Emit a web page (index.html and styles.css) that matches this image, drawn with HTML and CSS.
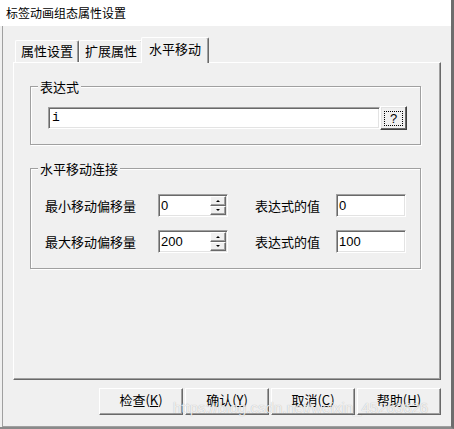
FILE: index.html
```html
<!DOCTYPE html>
<html>
<head>
<meta charset="utf-8">
<link rel="stylesheet" href="styles.css">
</head>
<body>
<div class="window">
  <div class="titlebar">标签动画组态属性设置</div>
  <div class="client">
    <div class="tabs">
      <div class="tab">属性设置</div>
      <div class="tab">扩展属性</div>
      <div class="tab active">水平移动</div>
    </div>
    <div class="panel">
      <div class="group g1">
        <div class="group-title">表达式</div>
        <div class="expr-row">
          <div class="field expr">i</div>
          <div class="qbtn"><span class="focus">?</span></div>
        </div>
      </div>
      <div class="group g2">
        <div class="group-title">水平移动连接</div>
        <div class="grid">
          <div class="label">最小移动偏移量</div>
          <div class="field spin"><span class="val-text">0</span><div class="spin-btns"><div class="sb"><i class="arrow up"></i></div><div class="sb"><i class="arrow down"></i></div></div></div>
          <div class="label label2">表达式的值</div>
          <div class="field val"><span class="val-text">0</span></div>
          <div class="label">最大移动偏移量</div>
          <div class="field spin"><span class="val-text">200</span><div class="spin-btns"><div class="sb"><i class="arrow up"></i></div><div class="sb"><i class="arrow down"></i></div></div></div>
          <div class="label label2">表达式的值</div>
          <div class="field val"><span class="val-text">100</span></div>
        </div>
      </div>
    </div>
    <div class="buttons">
      <div class="btn">检查(<u>K</u>)</div>
      <div class="btn">确认(<u>Y</u>)</div>
      <div class="btn">取消(<u>C</u>)</div>
      <div class="btn">帮助(<u>H</u>)</div>
    </div>
  </div>
  <div class="watermark">https://blog.csdn.net/weixin_45263626</div>
</div>
</body>
</html>
```
FILE: styles.css
```css
html, body {
  margin: 0;
  padding: 0;
  background: #f0f0f0;
  overflow: hidden;
}
body {
  font-family: "Noto Sans CJK SC", "Liberation Sans", sans-serif;
  color: #000;
}
.window {
  position: relative;
  width: 454px;
  height: 429px;
  box-sizing: border-box;
  border-right: 3px solid #6d6d6d;
  border-bottom: 2px solid #8a8a8a;
  display: flex;
  flex-direction: column;
  background: #f0f0f0;
}
.titlebar {
  height: 26px;
  flex: none;
  background: #fff;
  box-sizing: border-box;
  padding-left: 6px;
  font-size: 12px;
  line-height: 25px;
  white-space: nowrap;
}
.client {
  flex: 1;
  margin-left: 2px;
  border-left: 1px solid #a0a0a0;
  border-bottom: 1px solid #a0a0a0;
  background: #f0f0f0;
  display: flex;
  flex-direction: column;
}
.tabs {
  display: flex;
  align-items: flex-end;
  height: 25px;
  padding-top: 11px;
  padding-left: 12px;
  flex: none;
}
.tab {
  width: 64px;
  height: 22px;
  box-sizing: border-box;
  border-top: 1px solid #fff;
  border-left: 1px solid #fff;
  border-right: 1px solid #696969;
  box-shadow: inset -1px 0 0 #a0a0a0;
  border-radius: 2px 2px 0 0;
  font-size: 13px;
  line-height: 20px;
  text-align: center;
  white-space: nowrap;
}
.tab.active {
  width: 68px;
  height: 26px;
  margin-left: -2px;
  margin-bottom: -1px;
  line-height: 22px;
  background: #f0f0f0;
  position: relative;
  z-index: 1;
}
.panel {
  margin: 0 10px;
  height: 318px;
  box-sizing: border-box;
  border-top: 1px solid #fff;
  border-left: 1px solid #fff;
  border-right: 1px solid #696969;
  border-bottom: 1px solid #696969;
  box-shadow: inset -1px -1px 0 #a0a0a0;
  padding-left: 16px;
  padding-top: 23px;
  flex: none;
}
.group {
  width: 391px;
  box-sizing: border-box;
  border: 1px solid #a0a0a0;
  box-shadow: inset 1px 1px 0 #fff, 1px 1px 0 #fff;
}
.g1 { height: 59px; }
.g2 { height: 101px; margin-top: 23px; }
.group-title {
  width: fit-content;
  margin: -8px 0 0 7px;
  padding: 0 2px;
  height: 16px;
  line-height: 16px;
  font-size: 13px;
  background: #f0f0f0;
  white-space: nowrap;
}
.expr-row {
  display: flex;
  align-items: center;
  margin-top: 11px;
  margin-left: 17px;
}
.field {
  box-sizing: border-box;
  background: #fff;
  border-top: 1px solid #a0a0a0;
  border-left: 1px solid #a0a0a0;
  border-bottom: 1px solid #fff;
  border-right: 1px solid #fff;
  box-shadow: inset 1px 1px 0 #696969, inset -1px -1px 0 #e3e3e3;
}
.expr {
  width: 332px;
  height: 22px;
  font-family: "Liberation Mono", monospace;
  font-size: 13px;
  line-height: 20px;
  padding-left: 3px;
}
.qbtn {
  width: 27px;
  height: 24px;
  box-sizing: border-box;
  background: #f0f0f0;
  border-top: 1px solid #fff;
  border-left: 1px solid #fff;
  border-right: 1px solid #404040;
  border-bottom: 1px solid #404040;
  box-shadow: inset -1px -1px 0 #696969, inset 1px 1px 0 #e3e3e3;
  display: flex;
  align-items: center;
  justify-content: center;
}
.focus {
  width: 19px;
  height: 15px;
  box-sizing: border-box;
  border: 1px dotted #000;
  font-family: "Liberation Sans", sans-serif;
  font-size: 13px;
  line-height: 13px;
  text-align: center;
}
.grid {
  display: grid;
  grid-template-columns: 113px 70px 108px 70px;
  grid-auto-rows: 23px;
  row-gap: 13px;
  margin-top: 17px;
  margin-left: 14px;
}
.label {
  font-size: 13px;
  line-height: 23px;
  white-space: nowrap;
}
.label2 {
  padding-left: 27px;
}
.spin, .val {
  height: 23px;
  display: flex;
  align-items: stretch;
}
.val-text {
  flex: 1;
  font-family: "Liberation Sans", sans-serif;
  font-size: 13px;
  line-height: 21px;
  padding-left: 2px;
}
.spin-btns {
  width: 16px;
  display: flex;
  flex-direction: column;
  padding: 1px 1px 1px 0;
}
.sb {
  flex: 1;
  box-sizing: border-box;
  background: #f0f0f0;
  border-top: 1px solid #fff;
  border-left: 1px solid #fff;
  border-right: 1px solid #696969;
  border-bottom: 1px solid #696969;
  box-shadow: inset -1px -1px 0 #a0a0a0;
  display: flex;
  align-items: center;
  justify-content: center;
}
.arrow {
  width: 0;
  height: 0;
  border-left: 2px solid transparent;
  border-right: 2px solid transparent;
}
.arrow.up { border-bottom: 2px solid #000; }
.arrow.down { border-top: 2px solid #000; }
.buttons {
  display: flex;
  justify-content: flex-end;
  gap: 2px;
  margin: 8px 10px 0 0;
}
.btn {
  width: 84px;
  height: 27px;
  box-sizing: border-box;
  background: #f0f0f0;
  border-top: 1px solid #fff;
  border-left: 1px solid #fff;
  border-right: 1px solid #696969;
  border-bottom: 1px solid #696969;
  box-shadow: inset -1px -1px 0 #a0a0a0;
  font-size: 13px;
  line-height: 22px;
  text-align: center;
  white-space: nowrap;
}
.watermark {
  position: absolute;
  left: 173px;
  top: 399px;
  font-family: "Liberation Sans", sans-serif;
  font-size: 15px;
  color: rgba(255, 255, 255, 0.8);
  text-shadow: 0 0 1px rgba(0, 0, 0, 0.3);
  white-space: nowrap;
}
```
